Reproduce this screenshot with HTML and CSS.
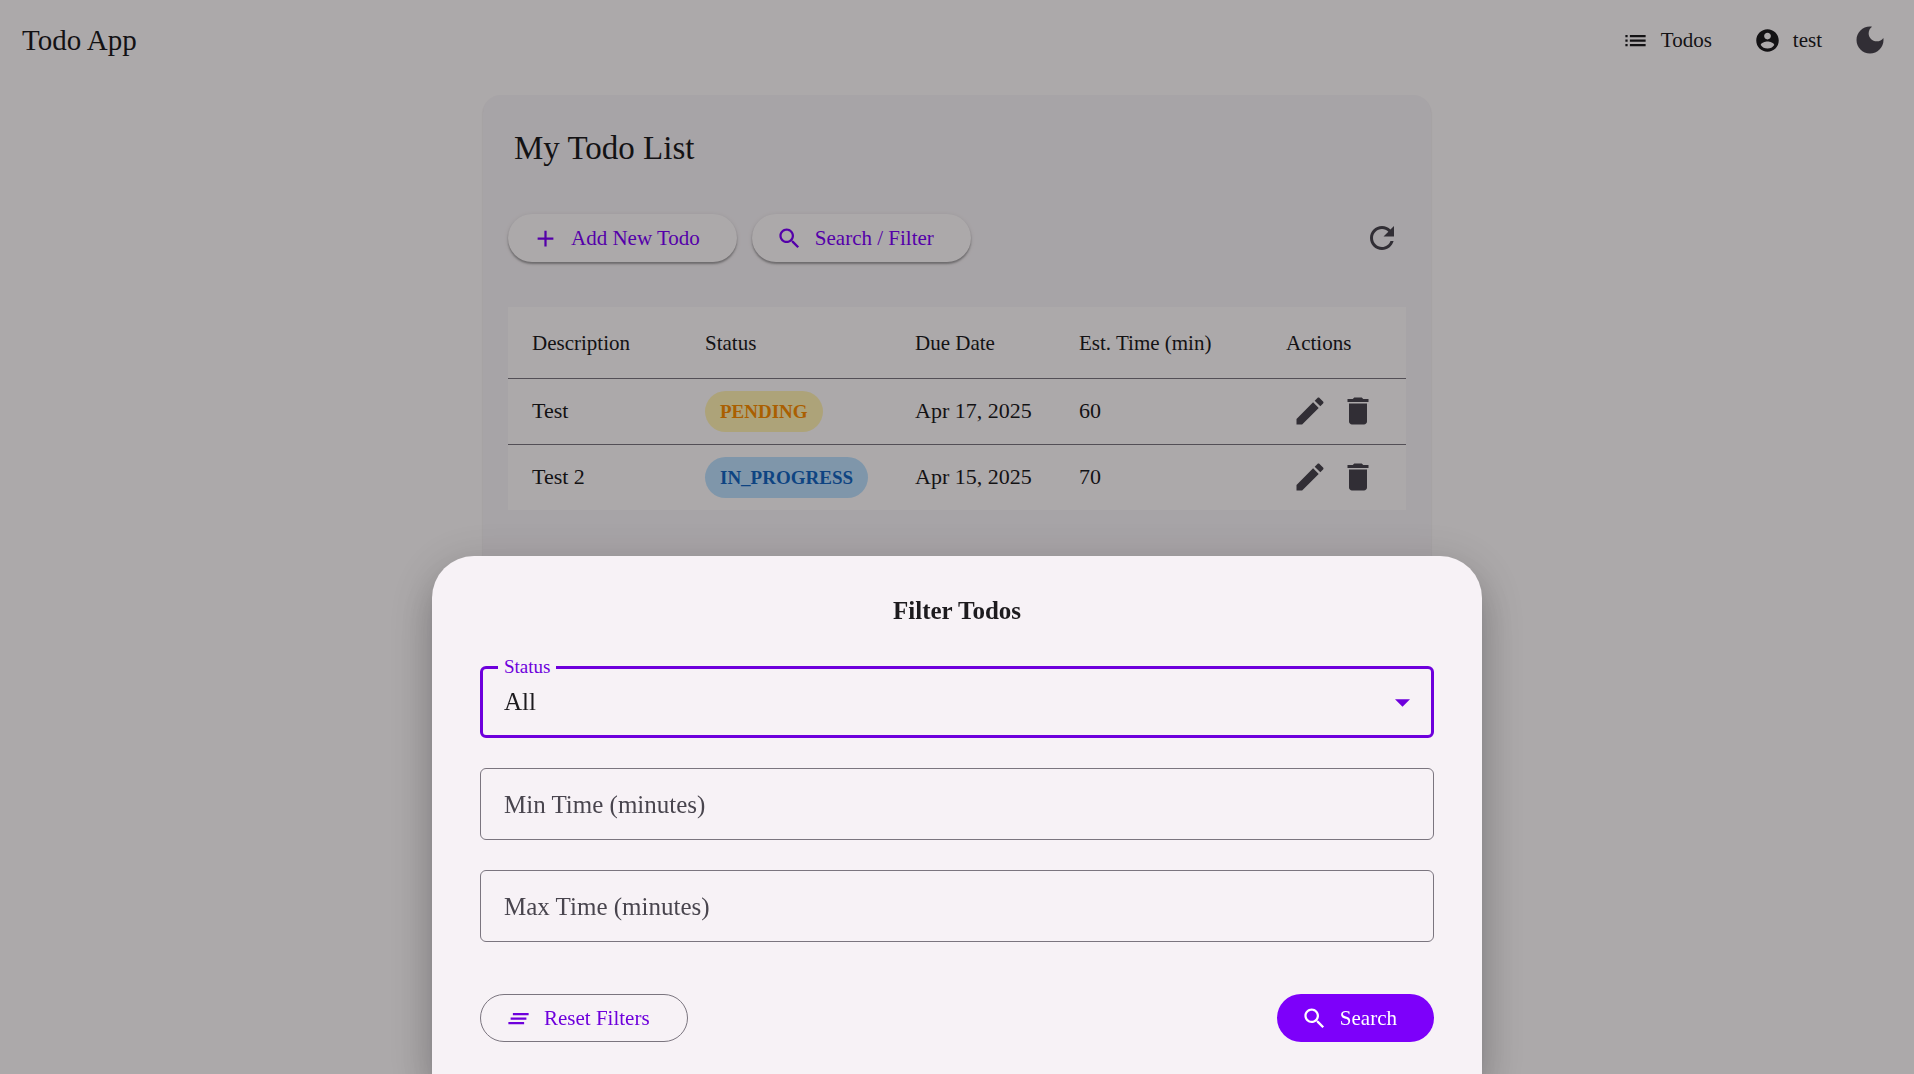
FILE: index.html
```html
<!DOCTYPE html>
<html lang="en">
<head>
<meta charset="utf-8">
<meta name="viewport" content="width=device-width, initial-scale=1">
<title>Todo App</title>
<link rel="stylesheet" href="styles.css">
</head>
<body>
<svg class="sprite" aria-hidden="true">
  <symbol id="i-list" viewBox="0 0 24 24"><path d="M3 13h2v-2H3v2zm0 4h2v-2H3v2zm0-8h2V7H3v2zm4 4h14v-2H7v2zm0 4h14v-2H7v2zM7 7v2h14V7H7z"/></symbol>
  <symbol id="i-account" viewBox="0 0 24 24"><path d="M12 2C6.48 2 2 6.48 2 12s4.48 10 10 10 10-4.48 10-10S17.52 2 12 2zm0 3c1.66 0 3 1.34 3 3s-1.34 3-3 3-3-1.34-3-3 1.34-3 3-3zm0 14.2c-2.5 0-4.71-1.28-6-3.22.03-1.99 4-3.08 6-3.08 1.99 0 5.97 1.09 6 3.08-1.29 1.94-3.5 3.22-6 3.22z"/></symbol>
  <symbol id="i-moon" viewBox="0 0 24 24"><path d="M12 3c-4.97 0-9 4.03-9 9s4.03 9 9 9 9-4.03 9-9c0-.46-.04-.92-.1-1.36-.98 1.37-2.58 2.26-4.4 2.26-2.98 0-5.4-2.42-5.4-5.4 0-1.81.89-3.42 2.26-4.4-.44-.06-.9-.1-1.36-.1z"/></symbol>
  <symbol id="i-add" viewBox="0 0 24 24"><path d="M19 13h-6v6h-2v-6H5v-2h6V5h2v6h6v2z"/></symbol>
  <symbol id="i-search" viewBox="0 0 24 24"><path d="M15.5 14h-.79l-.28-.27C15.41 12.59 16 11.11 16 9.5 16 5.91 13.09 3 9.5 3S3 5.91 3 9.5 5.91 16 9.5 16c1.61 0 3.09-.59 4.23-1.57l.27.28v.79l5 4.99L20.49 19l-4.99-5zm-6 0C7.01 14 5 11.99 5 9.5S7.01 5 9.5 5 14 7.01 14 9.5 11.99 14 9.5 14z"/></symbol>
  <symbol id="i-refresh" viewBox="0 0 24 24"><path d="M17.65 6.35C16.2 4.9 14.21 4 12 4c-4.42 0-7.99 3.58-7.99 8s3.57 8 7.99 8c3.73 0 6.84-2.55 7.73-6h-2.08c-.82 2.33-3.04 4-5.65 4-3.31 0-6-2.69-6-6s2.69-6 6-6c1.66 0 3.14.69 4.22 1.78L13 11h7V4l-2.35 2.35z"/></symbol>
  <symbol id="i-edit" viewBox="0 0 24 24"><path d="M3 17.25V21h3.75L17.81 9.94l-3.75-3.75L3 17.25zM20.71 7.04c.39-.39.39-1.02 0-1.41l-2.34-2.34c-.39-.39-1.02-.39-1.41 0l-1.83 1.83 3.75 3.75 1.83-1.83z"/></symbol>
  <symbol id="i-delete" viewBox="0 0 24 24"><path d="M6 19c0 1.1.9 2 2 2h8c1.1 0 2-.9 2-2V7H6v12zM19 4h-3.5l-1-1h-5l-1 1H5v2h14V4z"/></symbol>
  <symbol id="i-clear" viewBox="0 0 24 24"><path d="M5 13h14v-2H5v2zm-2 4h14v-2H3v2zM7 7v2h14V7H7z"/></symbol>
</svg>

<header class="toolbar">
  <span class="brand">Todo App</span>
  <nav class="nav">
    <a class="nav-link" href="#todos"><svg class="icon"><use href="#i-list"/></svg>Todos</a>
    <a class="nav-link" href="#account"><svg class="icon"><use href="#i-account"/></svg>test</a>
    <button class="icon-button" type="button" aria-label="Toggle dark mode"><svg class="icon icon-lg"><use href="#i-moon"/></svg></button>
  </nav>
</header>

<main class="card">
  <h1 class="card-title">My Todo List</h1>
  <div class="actions">
    <button class="button raised" type="button"><svg class="icon"><use href="#i-add"/></svg>Add New Todo</button>
    <button class="button raised" type="button"><svg class="icon"><use href="#i-search"/></svg>Search / Filter</button>
    <button class="icon-button refresh" type="button" aria-label="Refresh"><svg class="icon icon-lg"><use href="#i-refresh"/></svg></button>
  </div>
  <table class="todos">
    <colgroup><col class="col-description"><col class="col-status"><col class="col-due"><col class="col-time"><col></colgroup>
    <thead>
      <tr><th scope="col">Description</th><th scope="col">Status</th><th scope="col">Due Date</th><th scope="col">Est. Time (min)</th><th scope="col">Actions</th></tr>
    </thead>
    <tbody>
      <tr>
        <td>Test</td>
        <td><span class="badge pending">PENDING</span></td>
        <td>Apr 17, 2025</td>
        <td>60</td>
        <td><div class="row-actions">
          <button class="icon-button" type="button" aria-label="Edit Test"><svg class="icon icon-lg"><use href="#i-edit"/></svg></button>
          <button class="icon-button" type="button" aria-label="Delete Test"><svg class="icon icon-lg"><use href="#i-delete"/></svg></button>
        </div></td>
      </tr>
      <tr>
        <td>Test 2</td>
        <td><span class="badge progress">IN_PROGRESS</span></td>
        <td>Apr 15, 2025</td>
        <td>70</td>
        <td><div class="row-actions">
          <button class="icon-button" type="button" aria-label="Edit Test 2"><svg class="icon icon-lg"><use href="#i-edit"/></svg></button>
          <button class="icon-button" type="button" aria-label="Delete Test 2"><svg class="icon icon-lg"><use href="#i-delete"/></svg></button>
        </div></td>
      </tr>
    </tbody>
  </table>
</main>

<div class="scrim">
  <form class="sheet" role="dialog" aria-labelledby="sheet-title">
    <h2 class="sheet-title" id="sheet-title">Filter Todos</h2>
    <div class="fields">
      <div class="field focused">
        <select class="control" id="status">
          <option>All</option>
          <option>PENDING</option>
          <option>IN_PROGRESS</option>
        </select>
        <label class="floating" for="status">Status</label>
        <svg class="arrow" viewBox="0 0 10 5" aria-hidden="true"><path d="M0 0h10L5 5z"/></svg>
      </div>
      <div class="field">
        <input class="control" id="min-time" type="text" inputmode="numeric">
        <label class="resting" for="min-time">Min Time (minutes)</label>
      </div>
      <div class="field">
        <input class="control" id="max-time" type="text" inputmode="numeric">
        <label class="resting" for="max-time">Max Time (minutes)</label>
      </div>
    </div>
    <div class="sheet-actions">
      <button class="button outlined" type="reset"><svg class="icon"><use href="#i-clear"/></svg>Reset Filters</button>
      <button class="button filled" type="button"><svg class="icon"><use href="#i-search"/></svg>Search</button>
    </div>
  </form>
</div>
</body>
</html>
```
FILE: styles.css
```css
:root {
  --surface: #fef9fb;
  --surface-low: #f7f2f6;
  --on-surface: #1d1b1e;
  --on-surface-variant: #49454e;
  --outline: #7b757f;
  --primary: #7d00fa;
  --primary-deep: #6e00dc;
}

* {
  box-sizing: border-box;
}

body {
  margin: 0;
  min-height: 100vh;
  overflow: hidden;
  background: var(--surface);
  color: var(--on-surface);
  font: 21px/30px "Liberation Serif", serif;
}

.sprite {
  display: none;
}

button,
input,
select {
  margin: 0;
  font: inherit;
  color: inherit;
}

.icon {
  flex: none;
  width: 27px;
  height: 27px;
  fill: currentColor;
}

.icon-lg {
  width: 36px;
  height: 36px;
}

.icon-button {
  display: flex;
  align-items: center;
  justify-content: center;
  width: 48px;
  height: 48px;
  padding: 0;
  border: 0;
  border-radius: 50%;
  background: none;
  color: var(--on-surface-variant);
}

/* Toolbar */
.toolbar {
  display: flex;
  align-items: center;
  justify-content: space-between;
  height: 80px;
  padding: 0 20px 0 22px;
}

.brand {
  font-size: 29px;
  line-height: 32px;
}

.nav {
  display: flex;
  align-items: center;
}

.nav-link {
  display: flex;
  align-items: center;
  gap: 12px;
  padding: 0 24px 0 18px;
  color: inherit;
  text-decoration: none;
}

/* Todo list */
.card {
  max-width: 948px;
  min-height: 800px;
  margin: 15px auto 0;
  padding: 25px;
  border-radius: 18px;
  background: var(--surface-low);
  box-shadow: 0 2px 2px rgba(0, 0, 0, 0.1), 0 1px 2px rgba(0, 0, 0, 0.06);
}

.card-title {
  margin: 5px 0 43px;
  padding: 0 6px;
  font-size: 33px;
  font-weight: 400;
  line-height: 46px;
}

.actions {
  display: flex;
  align-items: center;
  gap: 15px;
  margin-bottom: 45px;
}

.refresh {
  margin-left: auto;
}

.button {
  display: flex;
  align-items: center;
  gap: 12px;
  height: 48px;
  padding: 0 37px 0 24px;
  border: 0;
  border-radius: 24px;
  white-space: nowrap;
}

.raised {
  background: var(--surface);
  color: var(--primary);
  box-shadow: 0 2px 2px rgba(0, 0, 0, 0.3), 0 1px 5px rgba(0, 0, 0, 0.1);
}

.todos {
  width: 100%;
  border-collapse: collapse;
  table-layout: fixed;
  background: var(--surface);
}

.col-description { width: 173px; }
.col-status { width: 210px; }
.col-due { width: 164px; }
.col-time { width: 207px; }

.todos th,
.todos td {
  height: 66px;
  padding: 0 0 0 24px;
  text-align: left;
  font-weight: 400;
  white-space: nowrap;
}

.todos th {
  height: 71px;
  padding-top: 2px;
}

.todos td {
  border-top: 1px solid var(--outline);
  font-size: 22px;
}

.badge {
  display: inline-block;
  padding: 0 15px;
  border-radius: 21px;
  font-size: 19px;
  font-weight: 700;
  line-height: 41px;
  vertical-align: middle;
}

.pending {
  background: #fff0b3;
  color: #fb8c00;
}

.progress {
  background: #bbdefb;
  color: #1565c0;
}

.row-actions {
  display: flex;
}

/* Filter sheet */
.scrim {
  position: fixed;
  inset: 0;
  display: flex;
  align-items: flex-end;
  justify-content: center;
  background: rgba(0, 0, 0, 0.32);
}

.sheet {
  width: 100%;
  max-width: 1050px;
  padding: 37px 48px 32px;
  border-radius: 42px 42px 0 0;
  background: var(--surface-low);
  box-shadow: 0 12px 15px -8px rgba(0, 0, 0, 0.2), 0 24px 36px 3px rgba(0, 0, 0, 0.14), 0 9px 45px 8px rgba(0, 0, 0, 0.12);
}

.sheet-title {
  margin: 0 0 37px;
  font-size: 25px;
  line-height: 36px;
  text-align: center;
}

.fields {
  display: grid;
  gap: 30px;
}

.field {
  position: relative;
  display: grid;
  align-items: center;
  font-size: 25px;
}

.control,
.resting {
  grid-area: 1 / 1;
}

.control {
  width: 100%;
  height: 72px;
  padding: 0 24px;
  border: 1px solid var(--outline);
  border-radius: 6px;
  outline: 0;
  background: none;
  appearance: none;
}

.resting {
  padding: 2px 24px 0;
  color: var(--on-surface-variant);
  pointer-events: none;
}

.focused .control {
  padding: 0 21px;
  border: 3px solid var(--primary-deep);
}

.floating {
  position: absolute;
  top: -14px;
  left: 18px;
  padding: 0 6px;
  background: var(--surface-low);
  color: var(--primary-deep);
  font-size: 19px;
}

.arrow {
  position: absolute;
  top: 33px;
  right: 24px;
  width: 15px;
  height: 8px;
  fill: var(--primary-deep);
}

.sheet-actions {
  display: flex;
  justify-content: space-between;
  margin-top: 52px;
}

.outlined {
  border: 1px solid var(--outline);
  background: none;
  color: var(--primary-deep);
}

.filled {
  background: var(--primary);
  color: #fff;
}
```
